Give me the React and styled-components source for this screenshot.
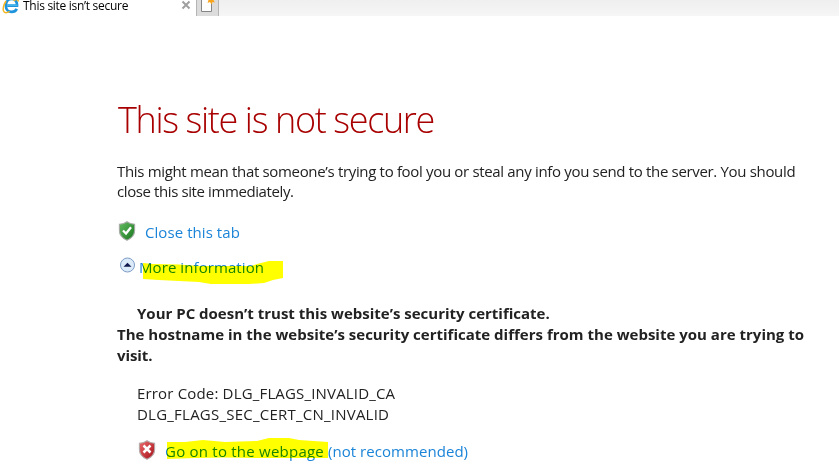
import React from 'react';
import styled, { createGlobalStyle } from 'styled-components';

const GlobalStyle = createGlobalStyle`
  * { box-sizing: border-box; }
  body { margin: 0; background: #fff; }
`;

const Page = styled.div`
  width: 839px;
  height: 476px;
  overflow: hidden;
  background: #fff;
  color: #222;
  font: 400 15px/20px "Open Sans", "Noto Sans", sans-serif;
  white-space: nowrap;
`;

const TabStrip = styled.header`
  display: flex;
  height: 16px;
  background: linear-gradient(#efefef, #f6f6f6);
`;

const Tab = styled.div`
  display: flex;
  width: 196px;
  height: 16px;
  background: #fff;
`;

const TabIcon = styled.svg`
  flex: none;
  width: 20px;
  height: 16px;
  margin-right: 3px;
`;

const TabTitle = styled.span`
  flex: 1;
  color: #000;
  font-size: 12px;
  line-height: 12px;
  letter-spacing: -0.29px;
`;

const TabClose = styled.svg`
  flex: none;
  width: 20px;
  height: 16px;
`;

const NewTab = styled.div`
  width: 23px;
  height: 16px;
  border: solid #b4b4b4;
  border-width: 0 1px;
  background: #dcdcdc;
`;

const Content = styled.main`
  display: flex;
  flex-direction: column;
  align-items: flex-start;
  padding: 80px 0 0 117px;
`;

const Title = styled.h1`
  margin: 0 0 17px;
  padding-left: 1px;
  color: #a80000;
  font-size: 36px;
  font-weight: 300;
  line-height: 48px;
  letter-spacing: -1.36px;
`;

const Paragraph = styled.p`
  margin: ${(p) => p.$margin || '0'};
  font-weight: ${(p) => (p.$bold ? 700 : 400)};
  line-height: ${(p) => p.$leading || 21}px;
`;

const Line = styled.span`
  display: block;
  padding-left: ${(p) => p.$indent || 0}px;
  letter-spacing: ${(p) => p.$spacing || 0}px;
`;

const Action = styled.div`
  display: flex;
  align-items: center;
  height: 20px;
  margin: ${(p) => p.$margin};
`;

const ActionIcon = styled.svg`
  flex: none;
  width: 20px;
  height: 20px;
  margin: -2px ${(p) => p.$gap}px 0 0;
`;

const Link = styled.a`
  position: relative;
  margin-right: 4px;
  color: #1a84d8;
  letter-spacing: ${(p) => p.$spacing || 0}px;
`;

const Marker = styled.svg`
  position: absolute;
  left: 0;
  top: ${(p) => p.$top}px;
  width: 170px;
  height: 36px;
  mix-blend-mode: multiply;
  pointer-events: none;
`;

const shieldPath = 'M10 .7C12.2 2.3 14.6 3 17.6 3.2V9.5C17.6 14 14.5 17.3 10 19.2C5.5 17.3 2.4 14 2.4 9.5V3.2C5.4 3 7.8 2.3 10 .7Z';

function Shield({ id, light, dark, edge, gap, children }) {
  return (
    <ActionIcon viewBox="0 0 20 20" $gap={gap}>
      <defs>
        <linearGradient id={id} x1="0" y1="0" x2="1" y2="1">
          <stop offset="0" stopColor={light} />
          <stop offset="1" stopColor={dark} />
        </linearGradient>
      </defs>
      <path d={shieldPath} fill={`url(#${id})`} stroke={edge} strokeWidth="1.1" />
      {children}
    </ActionIcon>
  );
}

function BrowserIcon() {
  return (
    <TabIcon viewBox="0 0 20 16">
      <path d="M16.8 8.8C15.8 10.8 14 11.9 11.6 11.9C8 11.9 5.9 9.3 5.9 5.7C5.9 1.8 8.3 -1 11.8 -1C15.300 -1 17.300 1.600 17 5.700H7.500" fill="none" stroke="#1f94dc" strokeWidth="2.7" />
      <path d="M17.500 5.200H8" stroke="#56c2f4" strokeWidth="1" />
      <path d="M6 1C3.300 5 2.200 10.500 4.400 12.200C6 13.300 8 12.300 9.600 11.300M13.500 .6C16 -.8 18.300 -1 18.300 1.500" fill="none" stroke="#f3b520" strokeWidth="1.5" />
    </TabIcon>
  );
}

export default function App() {
  return (
    <Page>
      <GlobalStyle />
      <TabStrip>
        <Tab>
          <BrowserIcon />
          <TabTitle>This site isn’t secure</TabTitle>
          <TabClose viewBox="0 0 20 16">
            <path d="M6.5 1.5L13.5 8.5M13.5 1.5L6.5 8.5" stroke="#a0a0a0" strokeWidth="2" />
          </TabClose>
        </Tab>
        <NewTab>
          <svg width="21" height="16" viewBox="0 0 21 16">
            <path d="M4.500 -2H14.500V11.500H4.500Z" fill="#fdfdfd" stroke="#858585" />
            <path d="M14 -3L15 -1L18 -1.500L16.600 .5L18 2.500L15.500 2L14.500 4.500L13 2L10.500 3L11.500 .5L9 -1L13 -1Z" fill="#f8a51b" />
          </svg>
        </NewTab>
      </TabStrip>
      <Content>
        <Title>This site is not secure</Title>
        <Paragraph $leading={20}>
          <Line $spacing={-0.33}>This might mean that someone’s trying to fool you or steal any info you send to the server. You should</Line>
          <Line $spacing={-0.4}>close this site immediately.</Line>
        </Paragraph>
        <Action $margin="21px 0 0">
          <Shield id="safe" light="#65bd62" dark="#18751e" edge="#a5aaa5" gap={8}>
            <path d="M6 9.500L9 12.500L14 6.200" fill="none" stroke="#fff" strokeWidth="2.3" />
          </Shield>
          <Link $spacing={0.07}>Close this tab</Link>
        </Action>
        <Action $margin="15px 0 0">
          <ActionIcon viewBox="0 0 20 20" $gap={2}>
            <circle cx="10.500" cy="9" r="7" fill="#dcebfa" stroke="#7d9cc4" />
            <path d="M6.500 10.800L10.500 6.800L14.500 10.800Z" fill="#10184c" />
          </ActionIcon>
          <Link $spacing={0.08}>
            More information
            <Marker viewBox="0 0 170 36" $top={-5}>
              <path d="M4 11L14 12L40 12.500L60 14H112L120 11.500L130 9H144V26L134 28L125 31L110 32H72L60 30L40 29L20 28L4 27Z" fill="#ff0" />
            </Marker>
          </Link>
        </Action>
        <Paragraph $bold $margin="26px 0 17px">
          <Line $indent={20}>Your PC doesn’t trust this website’s security certificate.</Line>
          <Line $spacing={0.01}>The hostname in the website’s security certificate differs from the website you are trying to</Line>
          <Line $spacing={-0.1}>visit.</Line>
        </Paragraph>
        <Paragraph>
          <Line $indent={20} $spacing={0.17}>Error Code: DLG_FLAGS_INVALID_CA</Line>
          <Line $indent={20} $spacing={0.23}>DLG_FLAGS_SEC_CERT_CN_INVALID</Line>
        </Paragraph>
        <Action $margin="16px 0 0 20px">
          <Shield id="unsafe" light="#ed6d6d" dark="#a50f18" edge="#b5a9a9" gap={8}>
            <path d="M6.500 5.500L13.500 12.500M13.500 5.500L6.500 12.500" stroke="#fff" strokeWidth="2.5" />
          </Shield>
          <Link $spacing={0.23}>
            Go on to the webpage
            <Marker viewBox="0 0 170 36" $top={-7}>
              <path d="M2 8L20 8L38 6L60 8L92 7L104 4H124L134 6L163 8V24H92L60 23.500L30 24L2 25Z" fill="#ff0" />
            </Marker>
          </Link>
          <Link $spacing={0.05}>(not recommended)</Link>
        </Action>
      </Content>
    </Page>
  );
}
